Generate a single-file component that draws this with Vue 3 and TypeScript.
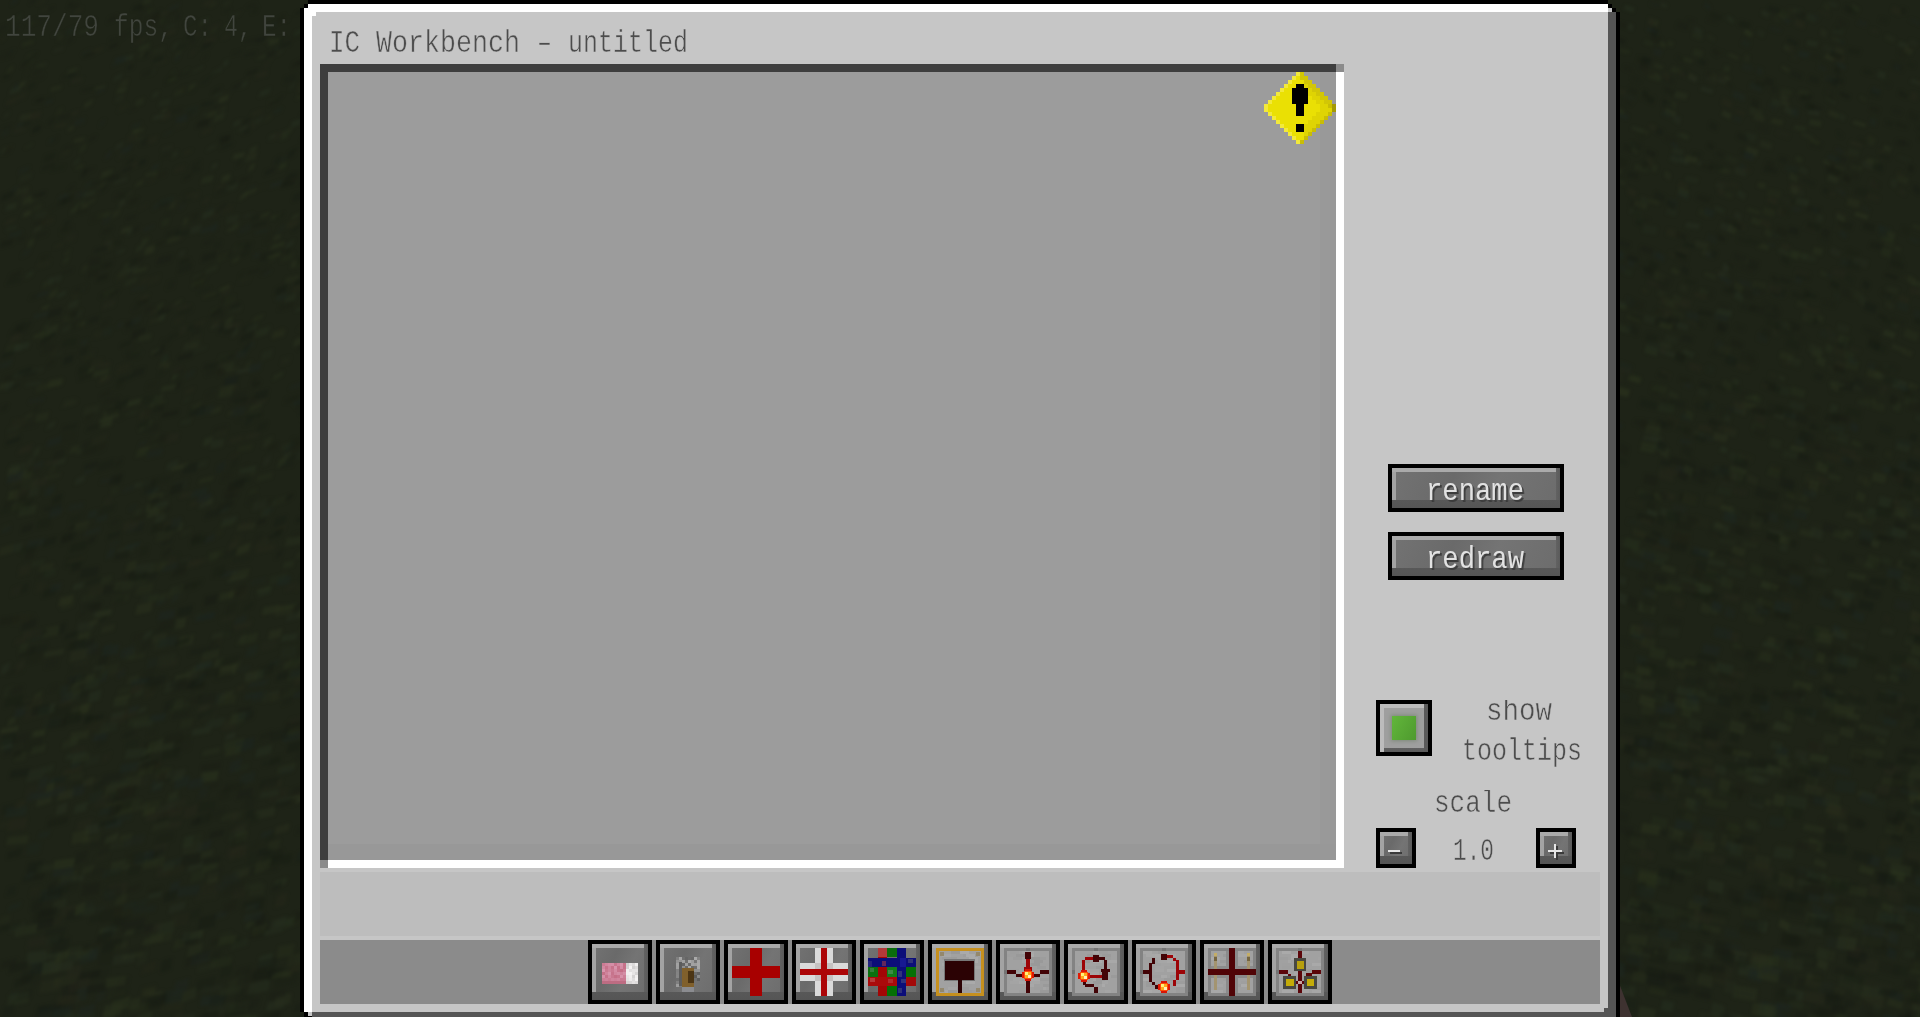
<script setup lang="ts">
import { ref, computed } from 'vue'

type Rect = [number, number, number, number, string]
type Word = { t: string; x: number; w: number }

const DARK = '#420306'
const RED = '#9c0407'

/* squeezes a run of monospace glyphs into w pixels, starting at x on baseline y */
function fit(t: string, x: number, y: number, w: number): string {
  const k = w / (t.length * 18.6)
  return `translate(${x} ${y}) scale(${k.toFixed(4)} 1)`
}

function torch(x: number, y: number): Rect[] {
  return [
    [x + 3, y, 6, 12, '#d81405'],
    [x, y + 3, 12, 6, '#e01a04'],
    [x + 2, y + 2, 8, 8, '#ff4a08'],
    [x + 3, y + 3, 6, 6, '#ffab1c'],
    [x + 3, y + 3, 3, 3, '#fff27a'],
    [x + 6, y + 6, 3, 3, '#fff0b8'],
  ]
}

function random(seed: number): () => number {
  let s = seed
  for (let i = 0; i < 5; i++) s = (s * 48271) % 2147483647
  return () => {
    s = (s * 48271) % 2147483647
    return s / 2147483647
  }
}

function plate(seed: number): Rect[] {
  const out: Rect[] = [
    [0, 0, 48, 48, '#838383'],
    [3, 3, 42, 42, '#a1a1a1'],
    [22, 0, 4, 3, '#747474'],
    [0, 22, 3, 4, '#747474'],
  ]
  const rnd = random(seed)
  for (let i = 0; i < 40; i++) {
    const v = 153 + Math.floor(rnd() * 18)
    out.push([3 + Math.floor(rnd() * 12) * 3, 3 + Math.floor(rnd() * 14) * 3, 9, 3, `rgb(${v},${v},${v})`])
  }
  return out
}

function speckle(x: number, y: number, c: number, r: number, tint: (v: number) => string, seed: number): Rect[] {
  const out: Rect[] = []
  const rnd = random(seed)
  for (let j = 0; j < r; j++)
    for (let i = 0; i < c; i++) out.push([x + i * 3, y + j * 3, 3, 3, tint(Math.floor(rnd() * 40))])
  return out
}

const tools: { name: string; light?: boolean; art: Rect[] }[] = [
  {
    name: 'erase',
    art: [
      ...speckle(6, 15, 8, 7, (v) => `rgb(${196 + v / 2},${110 + v},${134 + v})`, 7),
      ...speckle(30, 15, 4, 7, (v) => `rgb(${205 + v},${203 + v},${203 + v})`, 11),
      [6, 33, 24, 3, '#bd6c82'],
    ],
  },
  {
    name: 'lever',
    art: [
      ...speckle(12, 9, 8, 4, (v) => `rgb(${100 + v * 2},${100 + v * 2},${100 + v * 2})`, 23),
      ...speckle(12, 21, 2, 6, (v) => `rgb(${90 + v * 2},${90 + v * 2},${90 + v * 2})`, 29),
      ...speckle(30, 21, 2, 4, (v) => `rgb(${90 + v * 1.5},${90 + v * 1.5},${90 + v * 1.5})`, 31),
      [15, 14, 3, 24, '#5c5c5c'],
      [18, 20, 12, 19, '#80602c'],
      [24, 23, 6, 12, '#4c3514'],
      [18, 39, 12, 5, '#8b8c90'],
    ],
  },
  { name: 'wire', art: [[18, 0, 12, 48, '#a80000'], [0, 18, 48, 12, '#a80000']] },
  {
    name: 'insulated',
    art: [
      [15, 0, 18, 48, '#dadada'], [0, 15, 48, 18, '#dadada'], [15, 15, 18, 18, '#c5c2c2'],
      [21, 0, 6, 48, '#ac0507'], [0, 21, 48, 6, '#ac0507'],
    ],
  },
  {
    name: 'bundled',
    art: [
      [10, 0, 9, 48, '#a30606'], [10, 0, 9, 9, '#b33939'],
      [0, 29, 29, 9, '#aa0b0b'], [38, 29, 10, 9, '#a30909'],
      [19, 0, 10, 9, '#0a6d0c'], [0, 19, 10, 10, '#0c700f'],
      [19, 19, 10, 10, '#127d19'], [38, 19, 10, 10, '#067006'], [19, 38, 10, 10, '#067006'],
      [0, 10, 48, 9, '#0c0e79'], [29, 0, 9, 48, '#0c0e79'],
      [0, 13, 4, 6, '#24257e'], [14, 13, 4, 5, '#63265c'], [32, 10, 6, 9, '#171992'],
      [30, 23, 4, 6, '#30327c'], [33, 31, 5, 4, '#30327c'], [30, 40, 4, 5, '#30327c'],
      [20, 22, 5, 4, '#3c8c45'], [2, 30, 5, 4, '#b73a3a'], [20, 31, 5, 4, '#b12c2c'],
      [40, 11, 5, 4, '#30327c'], [2, 20, 4, 4, '#34803a'],
    ],
  },
  {
    name: 'io', light: true,
    art: [
      ...plate(41),
      [0, 0, 48, 3, '#c6901e'], [0, 45, 48, 3, '#c6901e'], [0, 0, 3, 48, '#c6901e'], [45, 0, 3, 48, '#c6901e'],
      [4, 4, 4, 4, '#94886c'], [40, 4, 4, 4, '#94886c'], [4, 40, 4, 4, '#94886c'], [40, 40, 4, 4, '#94886c'],
      [8, 11, 31, 22, '#777'], [9, 13, 29, 19, '#2b0204'], [22, 32, 4, 13, '#2b0204'],
    ],
  },
  {
    name: 'simple', light: true,
    art: [
      ...plate(53),
      [21, 4, 6, 7, DARK], [22, 11, 4, 9, RED], [20, 19, 8, 4, RED],
      [22, 32, 4, 13, DARK], [3, 22, 9, 4, DARK], [12, 26, 7, 3, DARK],
      [36, 22, 9, 4, DARK], [30, 26, 6, 3, DARK],
      ...torch(18, 21),
    ],
  },
  {
    name: 'latch', light: true,
    art: [
      ...plate(67),
      [10, 12, 3, 11, RED], [13, 9, 9, 3, RED], [21, 7, 6, 7, DARK], [27, 9, 6, 3, DARK],
      [32, 12, 3, 10, DARK], [29, 21, 9, 3, DARK], [18, 27, 12, 3, RED], [30, 24, 6, 8, DARK],
      [11, 33, 3, 4, DARK], [13, 36, 9, 3, DARK], [22, 39, 4, 6, DARK],
      ...torch(6, 22),
    ],
  },
  {
    name: 'timer', light: true,
    art: [
      ...plate(79),
      [21, 6, 6, 6, DARK], [27, 7, 6, 3, RED], [33, 10, 3, 3, RED], [36, 12, 3, 20, RED],
      [39, 22, 6, 4, RED], [33, 32, 3, 6, RED], [12, 10, 3, 6, DARK], [9, 15, 3, 19, DARK],
      [3, 22, 6, 4, DARK], [12, 34, 3, 3, DARK], [15, 37, 3, 4, DARK],
      ...torch(18, 33),
    ],
  },
  {
    name: 'cell', light: true,
    art: [
      ...plate(83),
      [18, 3, 12, 42, '#8b8b8b'], [3, 18, 42, 12, '#8b8b8b'],
      [6, 8, 3, 34, '#a39470'], [39, 8, 3, 34, '#a39470'], [6, 5, 3, 3, '#c4ad66'], [39, 5, 3, 3, '#c4ad66'],
      [6, 9, 3, 4, '#75653f'], [39, 9, 3, 4, '#75653f'],
      [21, 0, 6, 48, '#500407'], [0, 21, 48, 6, '#500407'],
    ],
  },
  {
    name: 'lamps', light: true,
    art: [
      ...plate(97),
      [22, 3, 4, 8, '#5b0509'], [22, 23, 4, 22, '#5b0509'], [3, 22, 9, 4, '#5b0509'], [12, 26, 3, 3, '#5b0509'],
      [36, 22, 9, 4, '#5b0509'], [30, 25, 6, 3, '#5b0509'], [19, 33, 10, 3, '#5b0509'],
      [18, 10, 12, 13, '#484841'], [21, 13, 7, 8, '#b79f0c'],
      [7, 28, 13, 13, '#484841'], [10, 31, 8, 7, '#c4ac08'],
      [28, 28, 13, 13, '#484841'], [31, 31, 7, 7, '#c4ac08'],
      [22, 33, 4, 3, '#c8a6a4'],
    ],
  },
]

/* warning sign, 18x18 cells of 4px */
const warning = computed<Rect[]>(() => {
  const out: Rect[] = []
  for (let y = 0; y < 18; y++) {
    const half = y < 9 ? y + 1 : 18 - y
    const x0 = 9 - half
    const n = half * 2
    for (let i = 0; i < n; i++) {
      const x = x0 + i
      let c = '#eae004'
      if (i === 0) c = '#f2e93c'
      else if (x > 8 && i >= n - (y < 9 ? 2 : 1)) c = y < 8 ? '#d2c606' : '#c9bd05'
      else if (i > n - 5 && x > 9) c = '#dfd403'
      if (x === 17) c = '#a49a06'
      out.push([x, y, 1, 1, c])
    }
  }
  out.push([8, 3, 2, 1, '#000'], [7, 4, 4, 4, '#000'], [8, 8, 2, 3, '#000'], [8, 13, 2, 2, '#000'])
  return out
})

/* blurred night grass on both sides of the window */
const grass = computed(() => {
  const out: { d: string; f: string; o: number }[] = []
  const rnd = random(4711)
  const tones = ['#2b331e', '#28301d', '#171c13', '#1a1e14', '#1d2620', '#262f20', '#25271a', '#161b13']
  for (let i = 0; i < 3600; i++) {
    const left = i % 2 === 0
    const x = left ? rnd() * 305 : 1615 + rnd() * 305
    const y = rnd() * 1017
    const k = 0.7 + (y / 1017) * 0.8
    const w = (6 + rnd() * 10) * k
    const h = (4 + rnd() * 5) * k
    const sk = (left ? -1 : 1) * (2 + rnd() * 3)
    out.push({
      d: `M${x.toFixed(1)} ${y.toFixed(1)}l${w.toFixed(1)} ${sk.toFixed(1)}l-2 ${h.toFixed(1)}l${(-w).toFixed(1)} ${(-sk).toFixed(1)}z`,
      f: tones[Math.floor(rnd() * tones.length)],
      o: 0.2 + rnd() * 0.35,
    })
  }
  return out
})

const debugWords: Word[] = [
  { t: '117/79', x: 5, w: 94 }, { t: 'fps,', x: 114, w: 59 }, { t: 'C:', x: 183, w: 29 },
  { t: '4,', x: 224, w: 28 }, { t: 'E:', x: 262, w: 29 },
]
const titleWords: Word[] = [
  { t: 'IC', x: 9, w: 31 }, { t: 'Workbench', x: 56, w: 144 }, { t: '–', x: 217, w: 15 }, { t: 'untitled', x: 248, w: 120 },
]

const tooltips = ref(true)
const scale = ref(1)
const buttons = ['rename', 'redraw']
</script>

<template>
  <div class="screen">
    <svg class="world" width="1920" height="1017" aria-hidden="true">
      <rect width="1920" height="1017" fill="#1e2317" />
      <g class="blades">
        <path v-for="(g, i) in grass" :key="i" :d="g.d" :fill="g.f" :opacity="g.o" />
      </g>
      <path d="M1614 970L1632 1017H1614Z" fill="#3e3230" />
    </svg>
    <svg class="debug" width="300" height="50">
      <text v-for="w in debugWords" :key="w.x" :transform="fit(w.t, w.x, 36, w.w)">{{ w.t }}</text>
    </svg>

    <main class="window">
      <svg class="frame" width="1320" height="1017" shape-rendering="crispEdges" aria-hidden="true">
        <path d="M8 0H1308V4H1312V8H1316V12H1320V1017H4V1012H0V8H4V4H8Z" fill="#000" />
        <path d="M8 4H1308V1012H4V8H8Z" fill="#fff" />
        <path d="M12 12H1308V8H1312V12H1308V1008H1312V1012H1308V1016H8V1012H12Z" fill="#c6c6c6" />
        <path d="M1308 12H1316V1017H12V1012H1304V1008H1308Z" fill="#555" />
        <path d="M12 12H16V16H12Z" fill="#fff" />
      </svg>

      <header class="title">
        <svg width="400" height="52">
          <text v-for="w in titleWords" :key="w.x" :transform="fit(w.t, w.x, 40, w.w)">{{ w.t }}</text>
        </svg>
      </header>

      <div class="body">
        <section class="canvas">
          <div class="surface">
            <svg width="72" height="72" viewBox="0 0 18 18" shape-rendering="crispEdges">
              <rect v-for="(r, i) in warning" :key="i" :x="r[0]" :y="r[1]" :width="r[2]" :height="r[3]" :fill="r[4]" />
            </svg>
          </div>
        </section>

        <aside class="side">
          <button v-for="b in buttons" :key="b" class="btn wide">
            <svg width="168" height="40">
              <text class="lit" :transform="fit(b, 34, 32, 98)">{{ b }}</text>
            </svg>
          </button>

          <div class="option">
            <button class="check" @click="tooltips = !tooltips"><i v-if="tooltips"></i></button>
            <svg width="168" height="90">
              <text :transform="fit('show', 54, 20, 66)">show</text>
              <text :transform="fit('tooltips', 30, 60, 120)">tooltips</text>
            </svg>
          </div>

          <svg class="scale" width="160" height="38">
            <text :transform="fit('scale', 58, 22, 78)">scale</text>
          </svg>

          <div class="stepper">
            <button class="btn square" @click="scale -= 0.1">
              <svg width="32" height="32" shape-rendering="crispEdges">
                <path d="M10 20H22V22H10Z" fill="#3a3a3a" /><path d="M8 18H20V20H8Z" fill="#e6e6e6" />
              </svg>
            </button>
            <svg width="120" height="40">
              <text :transform="fit('1.0', 37, 32, 41)">{{ scale.toFixed(1) }}</text>
            </svg>
            <button class="btn square" @click="scale += 0.1">
              <svg width="32" height="32" shape-rendering="crispEdges">
                <path d="M10 20H16V14H18V20H24V22H18V28H16V22H10Z" fill="#3a3a3a" />
                <path d="M8 18H14V12H16V18H22V20H16V26H14V20H8Z" fill="#e6e6e6" />
              </svg>
            </button>
          </div>
        </aside>
      </div>

      <div class="info"></div>

      <nav class="toolbar">
        <button v-for="t in tools" :key="t.name" class="btn tool" :class="{ light: t.light }" :aria-label="t.name">
          <svg width="48" height="48" shape-rendering="crispEdges">
            <rect v-for="(r, i) in t.art" :key="i" :x="r[0]" :y="r[1]" :width="r[2]" :height="r[3]" :fill="r[4]" />
          </svg>
        </button>
      </nav>
    </main>
  </div>
</template>

<style>
body {
  background: #1e2317;
  overflow: hidden;
}
</style>

<style scoped>
.screen {
  position: relative;
  width: 1920px;
  height: 1017px;
  overflow: hidden;
  font-family: 'Liberation Mono', monospace;
}
svg {
  display: block;
  flex: none;
}
text {
  font-family: 'Liberation Mono', monospace;
  font-size: 31px;
  fill: #4c4c4c;
  stroke: #c6c6c6;
  stroke-width: 0.5px;
}
.world,
.debug,
.frame {
  position: absolute;
  left: 0;
  top: 0;
}
.blades {
  filter: blur(1.4px);
}
.debug text {
  fill: #41453e;
  stroke: #1e2317;
}
.window {
  position: relative;
  width: 1320px;
  height: 1017px;
  margin-left: 300px;
  box-sizing: border-box;
  padding: 12px 20px 0;
  display: flex;
  flex-direction: column;
}
.title,
.body,
.info,
.toolbar {
  position: relative;
  flex: none;
}
.title {
  height: 52px;
}
.body {
  height: 804px;
  display: flex;
}
.canvas {
  width: 1024px;
  height: 804px;
  box-sizing: border-box;
  border: 8px solid transparent;
  background:
    linear-gradient(#8b8b8b, #8b8b8b) right top / 8px 8px no-repeat border-box,
    linear-gradient(#8b8b8b, #8b8b8b) left bottom / 8px 8px no-repeat border-box,
    linear-gradient(#3e3e3e, #3e3e3e) left top / 1016px 8px no-repeat border-box,
    linear-gradient(#3e3e3e, #3e3e3e) left top / 8px 796px no-repeat border-box,
    linear-gradient(#fff, #fff) left top / 100% 100% no-repeat border-box;
}
.surface {
  height: 788px;
  display: flex;
  justify-content: flex-end;
  background:
    linear-gradient(#989898, #989898) left bottom / 100% 16px no-repeat,
    linear-gradient(#999, #999) right top / 16px 100% no-repeat,
    #9c9c9c;
}
.side {
  width: 256px;
  display: flex;
  flex-direction: column;
  padding-top: 400px;
  box-sizing: border-box;
}
button {
  appearance: none;
  margin: 0;
  padding: 0;
  border: 4px solid #000;
  border-radius: 0;
  box-sizing: border-box;
  flex: none;
}
.btn {
  background:
    linear-gradient(#aaa, #aaa) left top / calc(100% - 4px) 4px no-repeat,
    linear-gradient(#a3a3a3, #a3a3a3) left top / 4px calc(100% - 8px) no-repeat,
    linear-gradient(#585858, #555) left bottom / 100% 8px no-repeat,
    linear-gradient(90deg, #626262, #5b5b5b) right top / 4px 100% no-repeat,
    linear-gradient(115deg, #737373, #6a6a6a 35%, #747474 60%, #6c6c6c);
}
.wide {
  width: 176px;
  height: 48px;
  margin: 0 0 20px 44px;
}
.lit {
  fill: #e2e2e2;
  stroke: none;
  filter: drop-shadow(2px 2px 0 #3c3c3c);
}
.option {
  display: flex;
  height: 90px;
  margin: 100px 0 0 32px;
}
.check {
  width: 56px;
  height: 56px;
  display: flex;
  align-items: center;
  justify-content: center;
  background:
    linear-gradient(#5a5a5a, #5a5a5a) right top / 4px 100% no-repeat,
    linear-gradient(#606060, #5a5a5a) right bottom / calc(100% - 4px) 4px no-repeat,
    linear-gradient(#bcbcbc, #bcbcbc) left top / 4px 100% no-repeat,
    linear-gradient(#bcbcbc, #bcbcbc) left top / 100% 4px no-repeat,
    #9f9f9f;
}
.check i {
  width: 24px;
  height: 24px;
  background: linear-gradient(120deg, #62b63b, #4e9a2e);
  box-shadow: 0 0 4px 1px #7d8a78;
}
.scale {
  margin: 0 0 0 32px;
}
.stepper {
  display: flex;
  height: 40px;
  margin-left: 32px;
}
.square {
  width: 40px;
  height: 40px;
}
.info {
  height: 64px;
  margin-top: 4px;
  background: #bdbdbd;
}
.toolbar {
  height: 64px;
  margin-top: 4px;
  background: #8b8b8b;
  display: flex;
  justify-content: center;
  gap: 4px;
}
.tool {
  width: 64px;
  height: 64px;
  display: flex;
  align-items: center;
  justify-content: center;
}
</style>
